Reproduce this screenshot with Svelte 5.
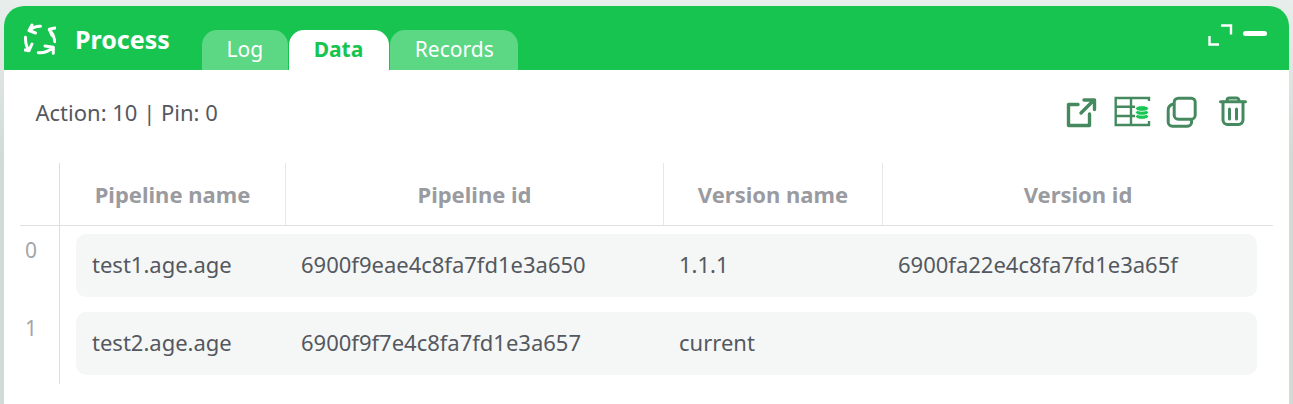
<script>
	const tabs = ['Log', 'Data', 'Records'];
	const columns = ['Pipeline name', 'Pipeline id', 'Version name', 'Version id'];
	const rows = [
		['test1.age.age', '6900f9eae4c8fa7fd1e3a650', '1.1.1', '6900fa22e4c8fa7fd1e3a65f'],
		['test2.age.age', '6900f9f7e4c8fa7fd1e3a657', 'current', '']
	];
</script>

<div class="page">
	<section class="panel">
		<header class="head">
			<svg class="logo" width="32" height="32" viewBox="0 0 32 32" fill="none" stroke="#fff" stroke-width="3" stroke-linecap="round" stroke-linejoin="round">
				<path d="M16.500 3.200C12.500 3 8.500 4.500 5.500 7.500M8 2 5 7.500l6.500 2.500" />
				<path d="M25.300 6.300c3 3.500 5 7.500 5.500 12.400M31 5l-5.700 1.300 2.700 6" />
				<path d="M1.500 14.300c-.2 5 1 9.500 3.500 13.400M1 27l4 .7L8 21" />
				<path d="M14.300 29.700c5.500 .5 10.500-1.500 15-5.400M21 23l8.300 1.300v6" />
			</svg>
			<h1>Process</h1>
			<nav class="tabs">
				{#each tabs as tab}
					<div class="tab" class:active={tab === 'Data'}>{tab}</div>
				{/each}
			</nav>
			<div class="winbtns">
				<svg width="26" height="24" viewBox="0 0 26 24" fill="none" stroke="#fff" stroke-width="2.400">
					<path d="M1.500 13v8.500H11" />
					<path d="M13 2.500h10v9" />
				</svg>
				<span class="minus"></span>
			</div>
		</header>

		<div class="body">
			<div class="toolbar">
				<span class="count">Action: 10 | Pin: 0</span>
				<div class="actions">
					<svg width="48" height="32" viewBox="0 0 48 32" fill="none" stroke="#458a5f" stroke-width="3.400" stroke-linecap="round" stroke-linejoin="round">
						<path d="M12 8.500H2.500v21h21V18" />
						<path d="M15 17 28 4M18 4h10.500v9.500" />
					</svg>
					<svg width="52" height="32" viewBox="0 0 52 32" fill="none" stroke="#458a5f" stroke-width="2.400">
						<path d="M35 5V2H1.700v27H35v-4" />
						<path d="M1.700 10.700H21M1.700 20H21M17 2v27" />
						<g fill="#19c653" stroke="#fff" stroke-width="0.800">
							<ellipse cx="28" cy="20.500" rx="6.500" ry="2.800" />
							<ellipse cx="28" cy="16.500" rx="6.500" ry="2.800" />
							<ellipse cx="28" cy="12.500" rx="6.500" ry="2.800" />
						</g>
					</svg>
					<svg width="52" height="32" viewBox="0 0 52 32" fill="none" stroke="#458a5f" stroke-width="3" stroke-linejoin="round">
						<rect x="8.200" y="2.200" width="21" height="21" rx="4" />
						<path d="M8 8C4.500 8.500 2.200 10.500 2.200 14v12a4.200 4.200 0 0 0 4.200 4.200h15a4.200 4.200 0 0 0 4.200-4.200v-2.800" />
					</svg>
					<svg width="30" height="32" viewBox="0 0 30 32" fill="none" stroke="#458a5f" stroke-width="3" stroke-linecap="round" stroke-linejoin="round">
						<path d="M2.500 5.700h25M9 5.500V4.500A2.500 2.500 0 0 1 11.500 2h7A2.500 2.500 0 0 1 21 4.500v1" />
						<path d="M5 6v18a4.500 4.500 0 0 0 4.500 4.500h11A4.500 4.500 0 0 0 25 24V6" />
						<path d="M11.500 13v10M18.500 13v10" />
					</svg>
				</div>
			</div>

			<div class="table">
				<div class="thead">
					<div class="corner"></div>
					{#each columns as col}
						<div class="th">{col}</div>
					{/each}
				</div>
				<div class="tbody">
					{#each rows as row, i}
						<div class="row">
							<div class="idx">{i}</div>
							<div class="cells">
								{#each row as cell}
									<div class="td">{cell}</div>
								{/each}
							</div>
						</div>
					{/each}
				</div>
			</div>
		</div>
	</section>
</div>

<style>
	:global(body) {
		margin: 0;
		background: #fff;
	}
	.page {
		height: 404px;
		box-sizing: border-box;
		padding: 6px 4px 0;
		overflow: hidden;
		background: linear-gradient(#e8eeeb, #d0dbd5 40%);
		font-family: 'Noto Sans', sans-serif;
	}
	.panel {
		height: 398px;
		background: #fff;
		border-radius: 20px 20px 0 0;
		overflow: hidden;
	}
	.head {
		display: flex;
		height: 64px;
		background: #18c450;
	}
	.logo {
		margin: 17px 0 0 20px;
	}
	h1 {
		margin: 17px 0 0 19px;
		width: 127px;
		font-size: 25px;
		line-height: 33px;
		font-weight: 700;
		color: #fff;
	}
	.tabs {
		display: flex;
		align-self: flex-end;
		gap: 1px;
	}
	.tab {
		height: 40px;
		box-sizing: border-box;
		padding: 0 24.5px;
		border-radius: 15px 15px 0 0;
		background: #5cd784;
		color: #fff;
		font-size: 21px;
		line-height: 39px;
	}
	.tab.active {
		padding: 0 26px 0 25px;
		background: #fff;
		color: #18c450;
		font-weight: 700;
	}
	.winbtns {
		display: flex;
		align-items: flex-start;
		gap: 9px;
		margin: 17px 22px 0 auto;
	}
	.minus {
		display: block;
		width: 24px;
		height: 5px;
		margin-top: 8px;
		border-radius: 3px;
		background: #fff;
	}
	.body {
		padding: 0 16px;
	}
	.toolbar {
		display: flex;
		justify-content: space-between;
		height: 93px;
		padding: 0 25px 0 15.500px;
		box-sizing: border-box;
	}
	.count {
		margin-top: 27px;
		font-size: 22px;
		line-height: 30px;
		color: #555860;
	}
	.actions {
		display: flex;
		margin-top: 26px;
		align-items: flex-start;
	}
	.thead {
		display: flex;
		height: 62px;
		border-bottom: 1px solid #e0e0e0;
	}
	.corner {
		width: 40px;
		box-sizing: border-box;
		border-right: 1px solid #ddd;
	}
	.th {
		box-sizing: border-box;
		border-right: 1px solid #e8e8e8;
		text-align: center;
		font-size: 22px;
		font-weight: 700;
		line-height: 62px;
		color: #9a9ba0;
	}
	.th:nth-child(2) { width: 226px; }
	.th:nth-child(3) { width: 378px; }
	.th:nth-child(4) { width: 219px; }
	.th:nth-child(5) { width: 390px; border-right: 0; }
	.tbody {
		margin-left: 39px;
		padding-bottom: 1px;
		border-left: 1px solid #ddd;
	}
	.row {
		display: flex;
		margin-left: -40px;
		padding-top: 8px;
		margin-bottom: 7.400px;
	}
	.idx {
		width: 56px;
		padding-left: 5px;
		box-sizing: border-box;
		font-size: 21px;
		line-height: 32px;
		color: #a3a5a8;
	}
	.cells {
		display: grid;
		grid-template-columns: 209px 378px 219px 1fr;
		width: 1181px;
		height: 63px;
		background: #f4f7f5;
		border-radius: 10px;
	}
	.td {
		padding-left: 16px;
		font-size: 22px;
		line-height: 60.400px;
		color: #555860;
	}
</style>
